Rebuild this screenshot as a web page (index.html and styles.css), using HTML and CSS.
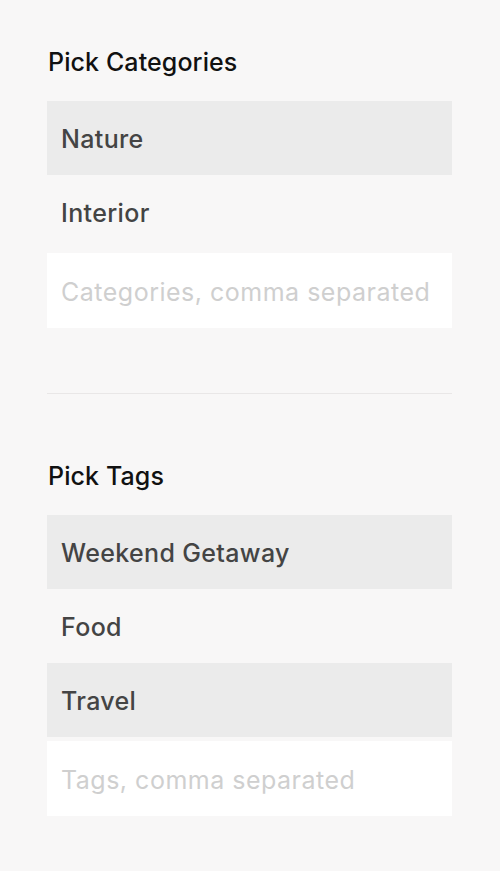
FILE: index.html
```html
<!DOCTYPE html>
<html>
<head>
<meta charset="utf-8">
<link rel="stylesheet" href="styles.css">
</head>
<body>
<main class="page">
  <section class="group">
    <h2 class="group-title">Pick Categories</h2>
    <ul class="options">
      <li class="option is-selected">Nature</li>
      <li class="option">Interior</li>
    </ul>
    <input class="entry" type="text" placeholder="Categories, comma separated">
  </section>
  <hr class="divider">
  <section class="group">
    <h2 class="group-title">Pick Tags</h2>
    <ul class="options">
      <li class="option is-selected">Weekend Getaway</li>
      <li class="option">Food</li>
      <li class="option is-selected">Travel</li>
    </ul>
    <input class="entry" type="text" placeholder="Tags, comma separated">
  </section>
</main>
</body>
</html>
```

FILE: styles.css
```css
* { box-sizing: border-box; }
html, body {
  margin: 0;
  background: #f8f7f7;
}
body {
  font-family: Inter, "Noto Sans", sans-serif;
}
.page {
  padding: 47px 48px 0 47px;
}
.group-title {
  margin: 0 0 24px 1px;
  font-size: 25px;
  line-height: 30px;
  font-weight: 500;
  color: #111;
  letter-spacing: 0.1px;
}
.options {
  list-style: none;
  margin: 0;
  padding: 0;
}
.option {
  height: 74px;
  display: flex;
  align-items: center;
  padding: 2px 14px 0;
  font-size: 25px;
  letter-spacing: 0.35px;
  color: #444;
  font-weight: 500;
}
.option.is-selected {
  background: #ebebeb;
}
.entry {
  display: block;
  width: 100%;
  height: 75px;
  margin-top: 4px;
  border: 0;
  background: #fff;
  padding: 2px 14px 0;
  font-family: inherit;
  font-size: 25px;
  letter-spacing: 0.5px;
  color: #444;
  outline: none;
}
.entry::placeholder {
  color: #cfcfcf;
}
.divider {
  border: 0;
  border-top: 1px solid #e9e7e7;
  margin: 65px 0 67px;
}
```
